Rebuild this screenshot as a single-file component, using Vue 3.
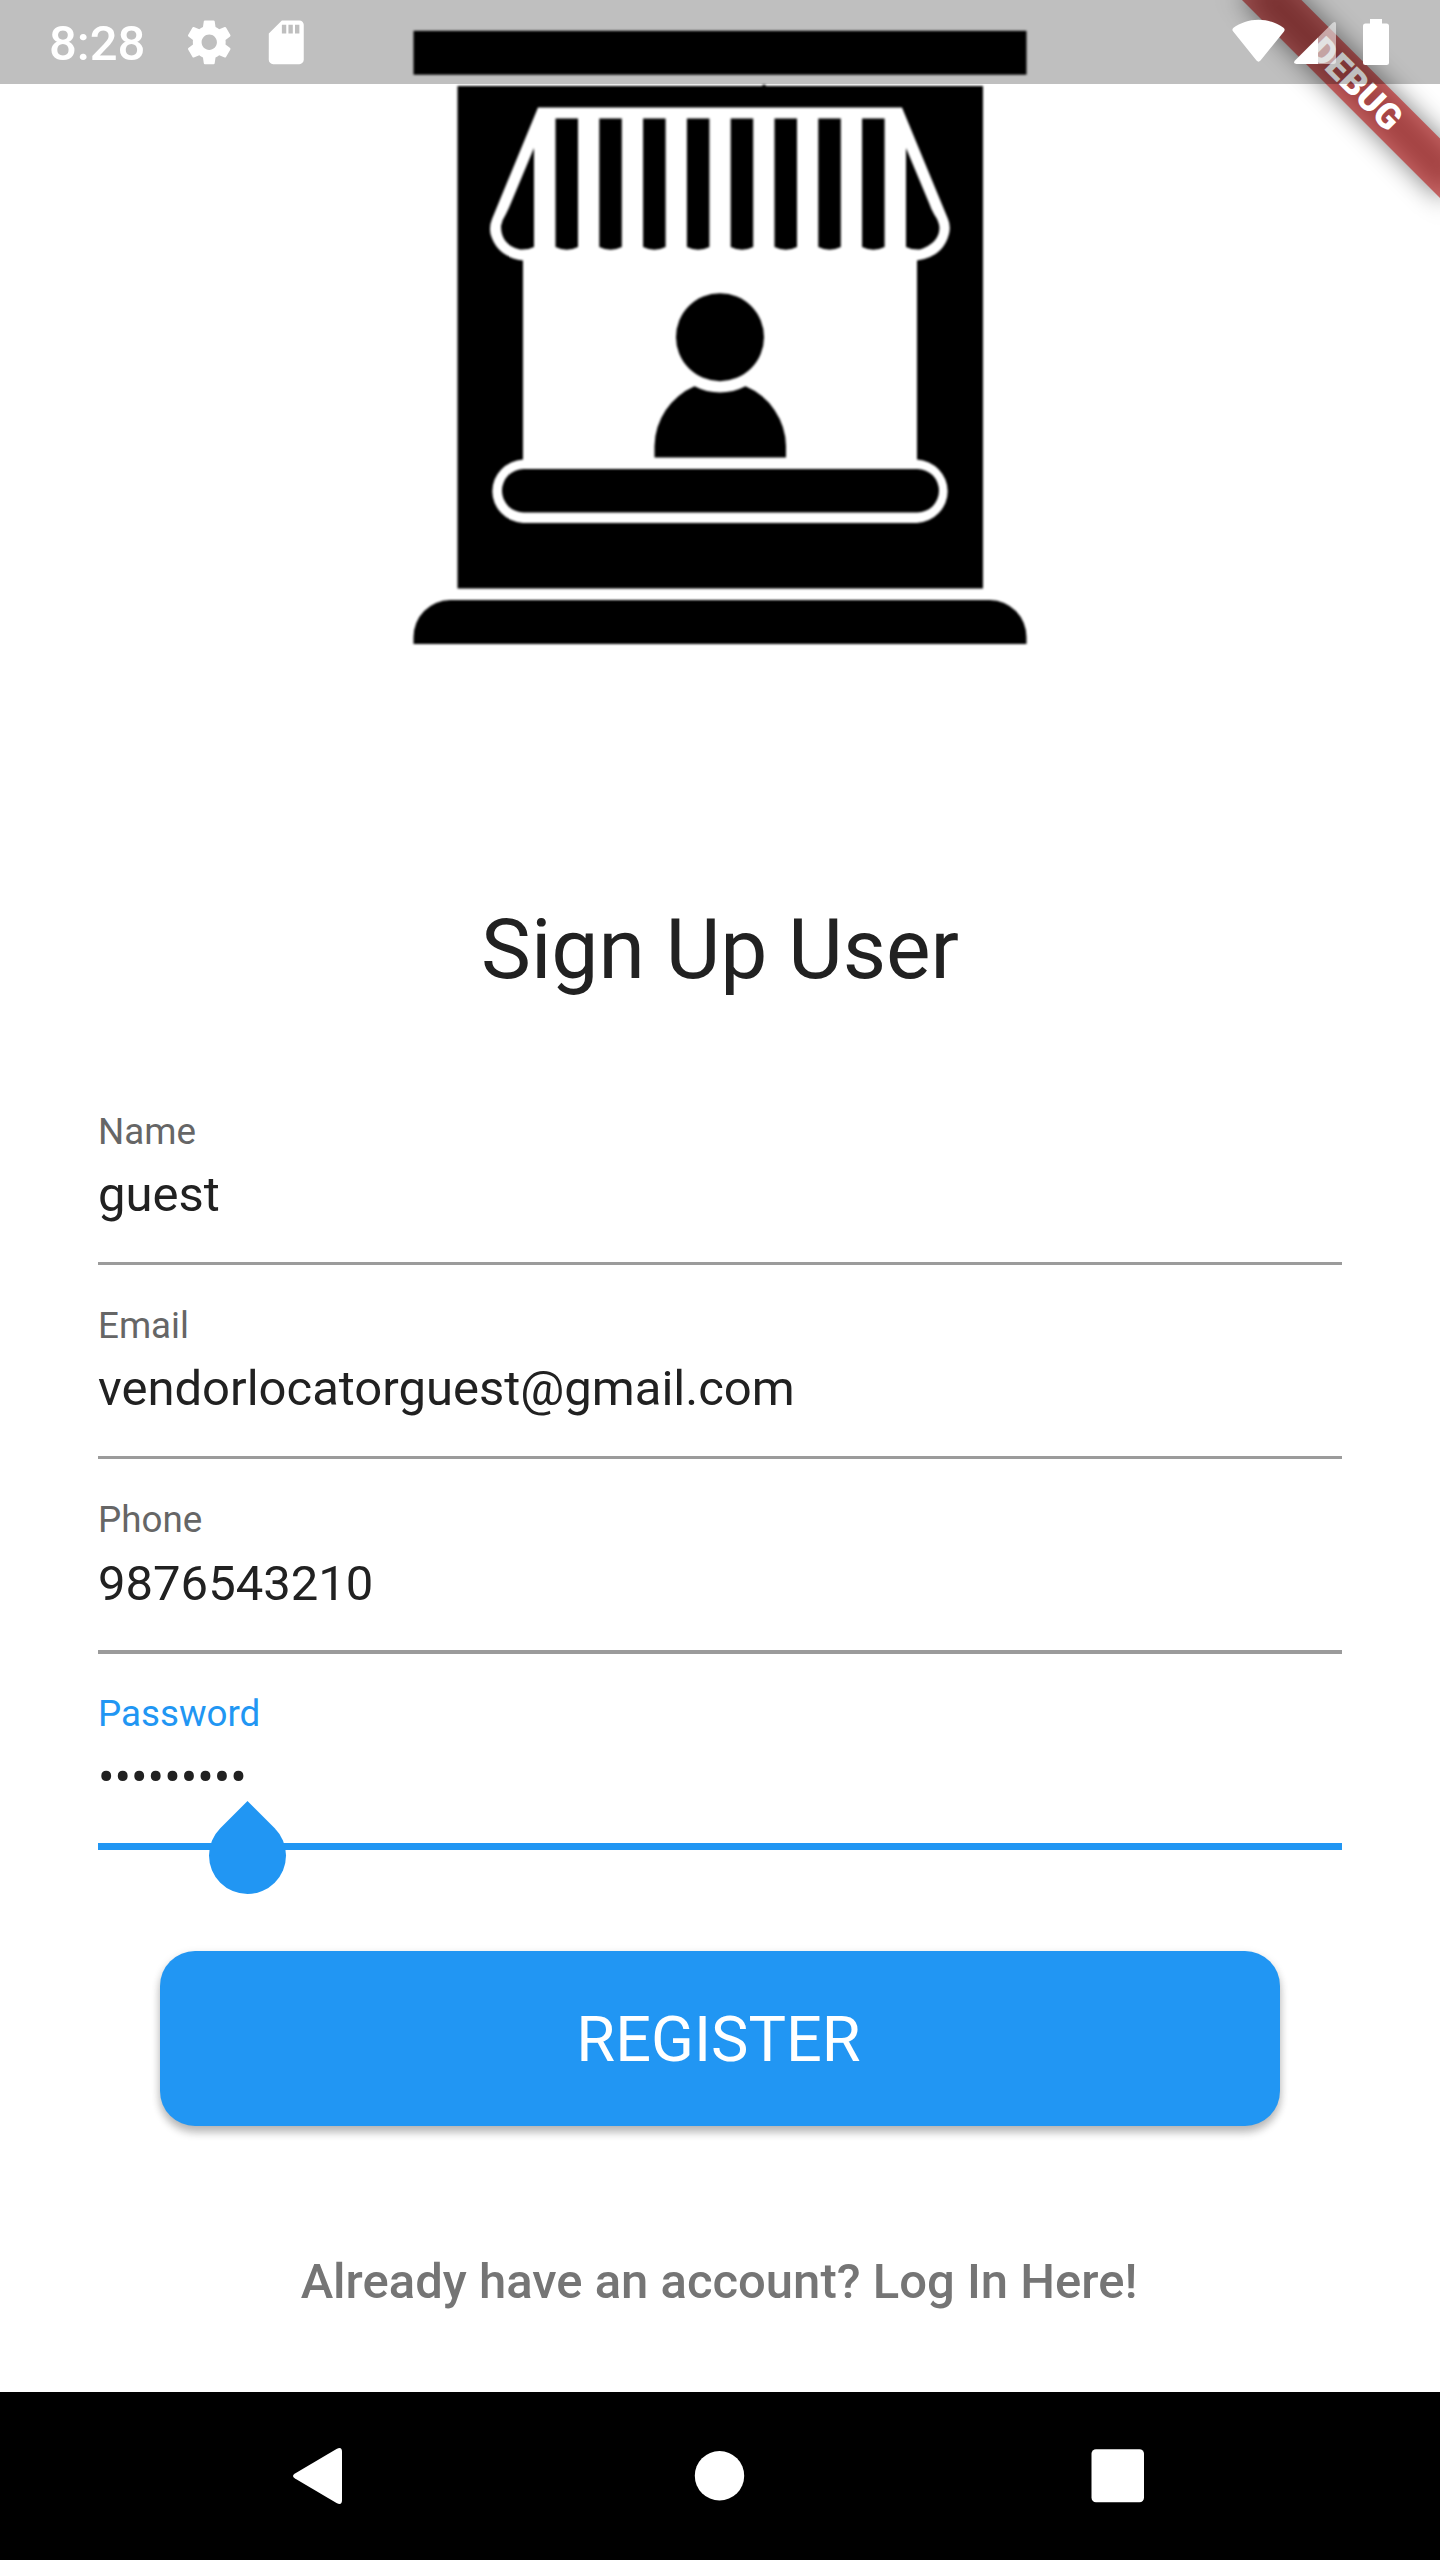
<script setup>
import { ref } from 'vue'

const fields = ref([
  { label: 'Name', value: 'guest' },
  { label: 'Email', value: 'vendorlocatorguest@gmail.com' },
  { label: 'Phone', value: '9876543210' },
  { label: 'Password', value: '•••••••••', focused: true },
])
const stripes = [555.5, 599.3, 643.1, 686.9, 730.7, 774.5, 818.3, 862.1]
</script>

<template>
  <div class="phone">
    <main class="screen">
      <svg class="shop" viewBox="400 0 640 680" aria-hidden="true">
        <rect x="413.5" y="30.8" width="613" height="43.9" />
        <path d="M457.5 86H983V588.5H457.5Z" />
        <circle cx="764" cy="86.5" r="2" />
        <path
          class="paper"
          d="M538 107.5H902L948 219Q951 226 949 234Q943 257 917 260.5V459.5A32.5 31.8 0 0 1 917 523H523A32.5 31.8 0 0 1 523 459.5V260.5Q497 257 490.5 234Q489 226 492 219Z"
        />
        <rect x="502" y="469" width="437" height="43.5" rx="21.75" />
        <path
          v-for="x in stripes"
          :key="x"
          :d="`M${x} 118.5h22.5v128.5q-11.25 5.5 -22.5 0z`"
        />
        <path d="M534 148V247Q528 250 520 249.5Q501 245 501 226Q502 220 506 214Q509 208 511 203Z" />
        <path d="M906 148V247Q912 250 920 249.5Q939 243 939.5 228Q939 221 934.5 215Q931 209 929 203Z" />
        <path d="M654.5 457.5V446A66 66 0 0 1 694.5 386.3A55.5 55.5 0 0 0 745.5 386.3A66 66 0 0 1 786 446V457.5Z" />
        <circle cx="720" cy="337.2" r="44" />
        <path d="M413.5 644V637A37 37 0 0 1 450 600H990A37 37 0 0 1 1026.5 637V644Z" />
      </svg>

      <h1 class="title">Sign Up User</h1>

      <form class="form" @submit.prevent>
        <div v-for="f in fields" :key="f.label" class="field" :class="{ focused: f.focused }">
          <label class="label">{{ f.label }}</label>
          <div class="value">
            <span>{{ f.value }}</span>
            <i v-if="f.focused" class="handle"></i>
          </div>
          <div class="line"></div>
        </div>
        <button class="register" type="submit">REGISTER</button>
      </form>

      <p class="login">Already have an account? Log In Here!</p>
    </main>

    <nav class="navbar">
      <svg viewBox="0 0 1440 168" aria-hidden="true">
        <path d="M295 81.5L336.5 57Q342 54 342 60V108Q342 114 336.5 111L295 86.5Q291 84 295 81.5Z" />
        <circle cx="719.5" cy="83.7" r="24.7" />
        <rect x="1091.5" y="57.3" width="52.5" height="53" rx="4.5" />
      </svg>
    </nav>

    <div class="corner">
      <div class="banner">
        <div class="banner-shadow"></div>
        <div class="banner-band">DEBUG</div>
      </div>
    </div>

    <header class="status">
      <span class="clock">8:28</span>
      <svg class="gear" viewBox="0 0 24 24" aria-hidden="true">
        <path d="M19.43 12.98c.04-.32.07-.64.07-.98s-.03-.66-.07-.98l2.11-1.65c.19-.15.24-.42.12-.64l-2-3.46c-.12-.22-.39-.3-.61-.22l-2.49 1c-.52-.4-1.08-.73-1.69-.98l-.38-2.65C14.46 2.18 14.25 2 14 2h-4c-.25 0-.46.18-.49.42l-.38 2.65c-.61.25-1.17.59-1.69.98l-2.49-1c-.23-.09-.49 0-.61.22l-2 3.46c-.13.22-.07.49.12.64l2.11 1.65c-.04.32-.07.65-.07.98s.03.66.07.98l-2.11 1.65c-.19.15-.24.42-.12.64l2 3.46c.12.22.39.3.61.22l2.49-1c.52.4 1.08.73 1.69.98l.38 2.65c.03.24.24.42.49.42h4c.25 0 .46-.18.49-.42l.38-2.65c.61-.25 1.17-.59 1.69-.98l2.49 1c.23.09.49 0 .61-.22l2-3.46c.12-.22.07-.49-.12-.64l-2.11-1.65zM12 15.5c-1.93 0-3.5-1.57-3.5-3.5s1.57-3.5 3.5-3.5 3.5 1.57 3.5 3.5-1.57 3.5-3.5 3.5z" />
      </svg>
      <svg class="card" viewBox="0 0 24 24" aria-hidden="true">
        <path d="M18 2h-8L4.02 8 4 20c0 1.1.9 2 2 2h12c1.1 0 2-.9 2-2V4c0-1.1-.9-2-2-2zm-6 6h-2V4h2v4zm3 0h-2V4h2v4zm3 0h-2V4h2v4z" />
      </svg>
      <svg class="system" viewBox="1220 0 180 84" aria-hidden="true">
        <path d="M1233.2 31.5Q1231.5 29.5 1233.5 27.7C1240 23 1249 19.7 1258.5 19.7S1277 23 1283.5 27.7Q1285.500 29.500 1284 31.500L1260.500 60.500Q1258.500 62.800 1256.500 60.500Z" />
        <path opacity=".55" d="M1318 37.5L1332.5 23Q1336 20.5 1336 24V61.5Q1336 64 1333.5 64H1318Z" />
        <path d="M1318 37.5V64H1296.5Q1292.5 63.5 1295 60.5Z" />
        <path d="M1370 19H1382V23.5H1386.5Q1389 23.5 1389 26V62.5Q1389 65 1386.5 65H1365.5Q1363 65 1363 62.5V26Q1363 23.5 1365.5 23.5H1370Z" />
      </svg>
    </header>
  </div>
</template>

<style>
body {
  margin: 0;
  background: #fff;
}
</style>

<style scoped>
.phone {
  position: relative;
  display: flex;
  flex-direction: column;
  width: 1440px;
  height: 2560px;
  overflow: hidden;
  background: #fff;
  color: #212121;
  font-family: Roboto, "Liberation Sans", sans-serif;
}
.screen {
  display: flex;
  flex: 1;
  flex-direction: column;
  align-items: center;
}
.shop {
  flex: none;
  width: 640px;
  height: 680px;
  filter: blur(0.9px);
}
.paper {
  fill: #fff;
}
.title {
  margin: 221px 0 0;
  font-size: 84px;
  font-weight: 400;
  line-height: 98px;
}
.form {
  display: flex;
  flex-direction: column;
  width: 1244px;
  margin-top: 72px;
}
.field {
  display: flex;
  flex-direction: column;
  height: 194.25px;
}
.label {
  margin-top: 38.5px;
  color: #666;
  font-size: 36.75px;
  line-height: 44px;
}
.value {
  position: relative;
  align-self: flex-start;
  margin-top: 12.5px;
  font-size: 49px;
  line-height: 58px;
  white-space: nowrap;
}
.line {
  height: 3.5px;
  margin-top: 37.5px;
  background: #9b9b9b;
}
.focused .label {
  color: #2196f3;
}
.focused .line {
  flex: none;
  height: 7px;
  margin-top: 35.75px;
  background: #2196f3;
}
.handle {
  position: absolute;
  top: 68.5px;
  right: -39px;
  width: 77px;
  height: 77px;
  border-radius: 0 50% 50% 50%;
  background: #2196f3;
  transform: rotate(45deg);
}
.register {
  height: 175px;
  margin: 103px 62px 0;
  padding: 2px 3px 0 0;
  border: 0;
  border-radius: 35px;
  background: #2196f3;
  box-shadow: 0 7px 9px rgba(0, 0, 0, 0.2), 0 3px 10px rgba(0, 0, 0, 0.14);
  color: #fff;
  font-family: inherit;
  font-size: 63px;
  line-height: 173px;
}
.login {
  margin: 127px 2px 0 0;
  color: #757575;
  font-size: 49px;
  font-weight: 500;
  line-height: 58px;
}
.navbar {
  height: 168px;
  background: #000;
}
.navbar svg {
  display: block;
  fill: #fff;
}
.corner {
  position: absolute;
  top: 0;
  right: 0;
  width: 400px;
  height: 400px;
  overflow: hidden;
}
.banner {
  position: absolute;
  top: 0;
  left: 400px;
  transform: rotate(45deg);
  transform-origin: 0 0;
}
.banner-shadow,
.banner-band {
  position: absolute;
  top: 98px;
  left: -140px;
  width: 280px;
  height: 42px;
}
.banner-shadow {
  background: rgba(0, 0, 0, 0.5);
  filter: blur(12.6px);
}
.banner-band {
  background: rgba(183, 28, 28, 0.627);
  color: #fff;
  font-size: 35.7px;
  font-weight: 900;
  line-height: 42px;
  text-align: center;
}
.status {
  position: absolute;
  inset: 0 0 auto;
  display: flex;
  align-items: center;
  height: 84px;
  background: rgba(0, 0, 0, 0.25);
  color: #fff;
}
.status svg {
  fill: #fff;
}
.clock {
  width: 134px;
  padding: 3px 0 0 49px;
  font-size: 49px;
  font-weight: 500;
  line-height: 84px;
}
.gear,
.card {
  width: 52.5px;
  height: 52.5px;
}
.card {
  margin-left: 24.2px;
}
.system {
  width: 180px;
  height: 84px;
  margin-left: auto;
  margin-right: 40px;
}
</style>
